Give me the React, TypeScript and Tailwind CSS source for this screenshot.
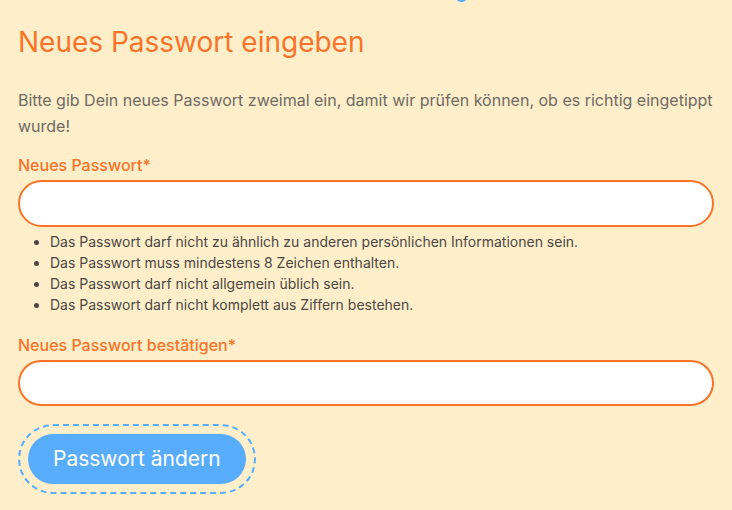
import React from 'react';

const hints = [
  'Das Passwort darf nicht zu ähnlich zu anderen persönlichen Informationen sein.',
  'Das Passwort muss mindestens 8 Zeichen enthalten.',
  'Das Passwort darf nicht allgemein üblich sein.',
  'Das Passwort darf nicht komplett aus Ziffern bestehen.'
];

const App: React.FC = () => {
  return (
    <div className="relative min-h-[510px] w-full bg-[#feefca] px-[18px] pt-[25px] font-['Inter',sans-serif]">
      <div className="absolute left-[456px] top-[-8px] h-[10px] w-[11px] rounded-full bg-[#57acfb]" />
      <h1 className="text-[28px] leading-[34px] font-normal text-[#fa7328]">Neues Passwort eingeben</h1>
      <p className="mt-[28px] text-[16px] leading-[26px] text-[#6e6a64]">
        Bitte gib Dein neues Passwort zweimal ein, damit wir prüfen können, ob es richtig eingetippt wurde!
      </p>
      <form className="mt-[14px]" onSubmit={e => e.preventDefault()}>
        <label className="block text-[16px] leading-[24px] font-medium text-[#fa7328]">
          Neues Passwort*
          <input
            type="password"
            className="mt-[3px] block h-[47px] w-full rounded-full border-2 border-[#fa7328] bg-white px-5 focus:outline-none"
          />
        </label>
        <ul className="mt-[4px] list-disc pl-[32px] text-[14px] leading-[21px] text-[#4a4744]">
          {hints.map(hint => (
            <li key={hint}>{hint}</li>
          ))}
        </ul>
        <label className="mt-[18px] block text-[16px] leading-[24px] font-medium text-[#fa7328]">
          Neues Passwort bestätigen*
          <input
            type="password"
            className="mt-[3px] block h-[46px] w-full rounded-full border-2 border-[#fa7328] bg-white px-5 focus:outline-none"
          />
        </label>
        <button
          type="submit"
          className="ml-[10px] mt-[28px] h-[50px] rounded-full bg-[#57acfb] px-[25px] text-[21px] font-normal text-white outline-2 outline-dashed outline-offset-[8px] outline-[#57acfb]"
        >
          Passwort ändern
        </button>
      </form>
    </div>
  );
};

export default App;
